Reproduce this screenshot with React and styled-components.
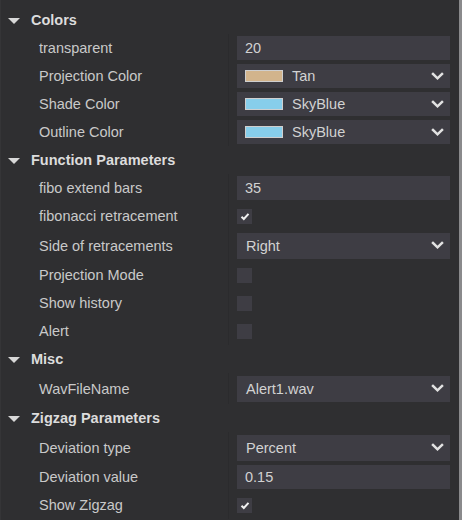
import React from "react";
import styled, { createGlobalStyle } from "styled-components";

const Global = createGlobalStyle`
  html, body { margin: 0; padding: 0; background: #2f2f31; }
  body { font-family: "Liberation Sans", Arial, sans-serif; }
`;

const Page = styled.div`
  display: flex;
  width: 462px;
  height: 520px;
  overflow: hidden;
  background: #2f2f31;
`;

const Panel = styled.div`
  flex: 1;
  display: flex;
  flex-direction: column;
  padding-top: 6px;
  border-left: 1px solid #353537;
`;

const ScrollEdge = styled.div`
  width: 3px;
  background: #8a8a8c;
`;

const Header = styled.div`
  height: 28px;
  display: flex;
  align-items: center;
  gap: 11px;
  padding-left: 7px;
  font-size: 14.5px;
  font-weight: bold;
  color: #dcdcdc;
`;

const Triangle = styled.span`
  width: 0;
  height: 0;
  border-left: 6px solid transparent;
  border-right: 6px solid transparent;
  border-top: 6px solid #d8d8d8;
  margin-top: 1px;
`;

const Row = styled.div`
  height: ${(p) => (p.$tall ? 31 : 28)}px;
  display: grid;
  grid-template-columns: 228px 1fr;
  align-items: center;
`;

const Label = styled.div`
  padding-left: 38px;
  font-size: 14.5px;
  color: #c9c9c9;
  white-space: nowrap;
  height: 100%;
  display: flex;
  align-items: center;
  border-right: 1px solid #2b2b2d;
`;

const Value = styled.div`
  padding: 0 9px 0 8px;
  display: flex;
  align-items: center;
`;

const Box = styled.div`
  flex: 1;
  height: ${(p) => (p.$tall ? 26 : 24)}px;
  background: #3e3d44;
  display: flex;
  align-items: center;
  padding: 0 6px 0 ${(p) => (p.$pad ?? 8)}px;
  font-size: 14.5px;
  color: #d2d2d2;
  box-sizing: border-box;
`;

const Swatch = styled.span`
  width: 36px;
  height: 10px;
  border: 1px solid #cfcfcf;
  background: ${(p) => p.$color};
  margin-right: 9px;
`;

const Text = styled.span`
  flex: 1;
`;

const Check = styled.div`
  width: 15px;
  height: 15px;
  background: #3e3d44;
  display: flex;
  align-items: center;
  justify-content: center;
`;

const Chevron = () => (
  <svg width="13" height="9" viewBox="0 0 13 9">
    <path d="M2 2 L6.5 6.3 L11 2" fill="none" stroke="#e2e2e2" strokeWidth="2.5" strokeLinecap="square" />
  </svg>
);

const Tick = () => (
  <svg width="10" height="9" viewBox="0 0 10 9">
    <path d="M1.5 4.8 L3.8 7 L8.5 1.8" fill="none" stroke="#f0f0f0" strokeWidth="2" />
  </svg>
);

const Section = ({ title }) => (
  <Header>
    <Triangle />
    {title}
  </Header>
);

const InputRow = ({ label, value }) => (
  <Row>
    <Label>{label}</Label>
    <Value>
      <Box>{value}</Box>
    </Value>
  </Row>
);

const ColorRow = ({ label, name, color }) => (
  <Row>
    <Label>{label}</Label>
    <Value>
      <Box>
        <Swatch $color={color} />
        <Text>{name}</Text>
        <Chevron />
      </Box>
    </Value>
  </Row>
);

const SelectRow = ({ label, value }) => (
  <Row $tall>
    <Label>{label}</Label>
    <Value>
      <Box $tall $pad={9}>
        <Text>{value}</Text>
        <Chevron />
      </Box>
    </Value>
  </Row>
);

const CheckRow = ({ label, checked }) => (
  <Row>
    <Label>{label}</Label>
    <Value>
      <Check>{checked && <Tick />}</Check>
    </Value>
  </Row>
);

export default function App() {
  return (
    <Page>
      <Global />
      <Panel>
        <Section title="Colors" />
        <InputRow label="transparent" value="20" />
        <ColorRow label="Projection Color" name="Tan" color="#d2b48c" />
        <ColorRow label="Shade Color" name="SkyBlue" color="#87ceeb" />
        <ColorRow label="Outline Color" name="SkyBlue" color="#87ceeb" />
        <Section title="Function Parameters" />
        <InputRow label="fibo extend bars" value="35" />
        <CheckRow label="fibonacci retracement" checked />
        <SelectRow label="Side of retracements" value="Right" />
        <CheckRow label="Projection Mode" />
        <CheckRow label="Show history" />
        <CheckRow label="Alert" />
        <Section title="Misc" />
        <SelectRow label="WavFileName" value="Alert1.wav" />
        <Section title="Zigzag Parameters" />
        <SelectRow label="Deviation type" value="Percent" />
        <InputRow label="Deviation value" value="0.15" />
        <CheckRow label="Show Zigzag" checked />
      </Panel>
      <ScrollEdge />
    </Page>
  );
}
